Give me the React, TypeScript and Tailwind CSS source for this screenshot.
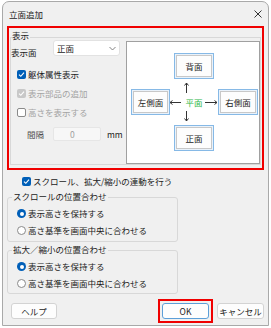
import React from 'react';

const font = "font-['Yu_Gothic_UI','Noto_Sans_CJK_JP',sans-serif]";

function Check({ checked, disabled }: { checked?: boolean; disabled?: boolean }) {
  if (!checked) {
    return <span className="block w-[9px] h-[9px] rounded-[2px] border border-[#8a8a8a] bg-white shrink-0" />;
  }
  return (
    <span
      className={`flex items-center justify-center w-[9px] h-[9px] rounded-[2px] shrink-0 ${
        disabled ? 'bg-[#c8c8c8]' : 'bg-[#005fb8]'
      }`}
    >
      <svg width="7" height="7" viewBox="0 0 7 7">
        <polyline points="1,3.6 2.8,5.3 6,1.6" fill="none" stroke="white" strokeWidth="1.1" />
      </svg>
    </span>
  );
}

function Radio({ checked }: { checked?: boolean }) {
  if (checked) {
    return (
      <span className="flex items-center justify-center w-[9px] h-[9px] rounded-full bg-[#005fb8] shrink-0">
        <span className="block w-[4px] h-[4px] rounded-full bg-white" />
      </span>
    );
  }
  return <span className="block w-[9px] h-[9px] rounded-full border border-[#8a8a8a] bg-white shrink-0" />;
}

function Node({ label }: { label: string }) {
  return (
    <div className="h-[26px] border border-[#86b9e6] p-[1px] bg-[#e9f2fb]">
      <div className="h-full border border-[#c8c8c8] bg-[#fdfdfd] flex items-center justify-center leading-none">
        {label}
      </div>
    </div>
  );
}

function Btn({ label }: { label: string }) {
  return (
    <div className="w-[47px] h-[16px] rounded-[3px] border border-[#d3d3d3] bg-[#fdfdfd] flex items-center justify-center leading-none">
      {label}
    </div>
  );
}

export default function App() {
  return (
    <div className={`w-[271px] h-[328px] bg-white pl-[2px] pt-[1px] ${font} text-[8.5px] text-[#1b1b1b]`}>
      <div className="w-[267px] h-[325px] border border-[#a9a9a9] rounded-t-[7px] bg-[#f0f0f0] flex flex-col">
        {/* タイトルバー */}
        <div className="h-[24px] shrink-0 flex items-center justify-between pl-[6px] pr-[6px]">
          <span className="leading-none">立面追加</span>
          <svg width="8" height="8" viewBox="0 0 8 8">
            <path d="M0.5 0.5 L7.5 7.5 M7.5 0.5 L0.5 7.5" stroke="#333" strokeWidth="1" />
          </svg>
        </div>

        <div className="flex flex-col px-[4px]">
          {/* 表示（赤枠） */}
          <div className="h-[144px] border-2 border-[#f00000]">
            <div className="ml-[1px] mt-[9px] w-[251px] h-[128px] border border-[#d8d8d8] flex flex-col">
              <span className="-mt-[8px] ml-[1px] h-[10px] leading-[10px] w-fit pr-[1px] bg-[#f0f0f0]">表示</span>
              <div className="mt-[1px] flex">
                <div className="w-[115px] flex flex-col">
                  <div className="flex items-start">
                    <span className="w-[42px] mt-[6px] leading-[10px]">表示面</span>
                    <div className="w-[67px] h-[16px] -mt-[1px] rounded-[3px] border border-[#e2e2e2] bg-white flex items-center justify-between pl-[3px] pr-[3px]">
                      <span className="leading-none">正面</span>
                      <svg width="7" height="5" viewBox="0 0 7 5">
                        <polyline points="0.5,1 3.5,4 6.5,1" fill="none" stroke="#777" strokeWidth="0.9" />
                      </svg>
                    </div>
                  </div>
                  <div className="mt-[8px] flex flex-col pl-[6px]">
                    <div className="h-[19px] flex items-center gap-[2px]">
                      <Check checked />
                      <span className="leading-none">躯体属性表示</span>
                    </div>
                    <div className="h-[19px] flex items-center gap-[2px] text-[#a3a3a3]">
                      <Check checked disabled />
                      <span className="leading-none">表示部品の追加</span>
                    </div>
                    <div className="h-[19px] flex items-center gap-[2px] text-[#a3a3a3]">
                      <Check />
                      <span className="leading-none">高さを表示する</span>
                    </div>
                  </div>
                  <div className="mt-[5px] h-[14px] flex items-center pl-[16px]">
                    <span className="w-[26px] leading-none text-[#505050]">間隔</span>
                    <div className="w-[48px] h-[14px] rounded-[2px] border border-[#e6e6e6] bg-[#f7f7f7] pl-[16px] flex items-center text-[#a0a0a0] leading-none">
                      0
                    </div>
                    <span className="ml-[6px] leading-none">mm</span>
                  </div>
                </div>

                {/* プレビュー */}
                <div className="w-[134px] h-[123px] border border-[#a0a0a0] bg-white pl-[4px] pt-[11px]">
                  <div className="grid grid-cols-[39px_40px_40px] grid-rows-[26px_26px_26px] gap-x-[4px] gap-y-[10px]">
                    <div />
                    <Node label="背面" />
                    <div />
                    <Node label="左側面" />
                    <div className="relative flex items-center justify-center">
                      <span className="leading-none text-[#2fb84a]">平面</span>
                      <svg className="absolute left-[-6px] top-[-8px]" width="52" height="42" viewBox="0 0 52 42">
                        <g stroke="#333" strokeWidth="1" fill="none">
                          <path d="M18.5 2 V12 M16.5 4.5 L18.5 2 L20.5 4.5" />
                          <path d="M18.5 30 V40 M16.5 37.5 L18.5 40 L20.5 37.5" />
                          <path d="M2 21.5 H13 M4.5 19.5 L2 21.5 L4.5 23.5" />
                          <path d="M37 21.5 H49 M46.5 19.5 L49 21.5 L46.5 23.5" />
                        </g>
                      </svg>
                    </div>
                    <Node label="右側面" />
                    <div />
                    <Node label="正面" />
                    <div />
                  </div>
                </div>
              </div>
            </div>
          </div>

          {/* 連動 */}
          <div className="mt-[5px] h-[12px] flex items-center gap-[2px] pl-[15px]">
            <Check checked />
            <span className="leading-none">スクロール、拡大/縮小の連動を行う</span>
          </div>

          {/* スクロールの位置合わせ */}
          <div className="mt-[10px] w-[171px] rounded-[3px] border border-[#d8d8d8] flex flex-col pb-[2px]">
            <span className="-mt-[7px] ml-[4px] h-[10px] leading-[10px] w-fit px-[1px] bg-[#f0f0f0]">スクロールの位置合わせ</span>
            <div className="mt-[4px] flex flex-col pl-[9px]">
              <div className="h-[17px] flex items-center gap-[2px]">
                <Radio checked />
                <span className="leading-none">表示高さを保持する</span>
              </div>
              <div className="h-[17px] flex items-center gap-[2px]">
                <Radio />
                <span className="leading-none">高さ基準を画面中央に合わせる</span>
              </div>
            </div>
          </div>

          {/* 拡大／縮小の位置合わせ */}
          <div className="mt-[8px] w-[171px] rounded-[3px] border border-[#d8d8d8] flex flex-col pb-[1px]">
            <span className="-mt-[7px] ml-[4px] h-[10px] leading-[10px] w-fit px-[1px] bg-[#f0f0f0]">拡大／縮小の位置合わせ</span>
            <div className="mt-[4px] flex flex-col pl-[9px]">
              <div className="h-[17px] flex items-center gap-[2px]">
                <Radio checked />
                <span className="leading-none">表示高さを保持する</span>
              </div>
              <div className="h-[17px] flex items-center gap-[2px]">
                <Radio />
                <span className="leading-none">高さ基準を画面中央に合わせる</span>
              </div>
            </div>
          </div>

          {/* ボタン */}
          <div className="mt-[5px] h-[24px] flex items-center">
            <div className="ml-[4px] w-[46px] h-[16px] rounded-[3px] border border-[#d3d3d3] bg-[#fdfdfd] flex items-center justify-center leading-none">
              ヘルプ
            </div>
            <div className="ml-auto w-[55px] h-[24px] border-2 border-[#f00000] p-[2px]">
              <div className="w-full h-full rounded-[3px] border border-[#5c9fd8] bg-[#fdfdfd] flex items-center justify-center leading-none">
                OK
              </div>
            </div>
            <div className="ml-[4px]">
              <Btn label="キャンセル" />
            </div>
          </div>
        </div>
      </div>
    </div>
  );
}
